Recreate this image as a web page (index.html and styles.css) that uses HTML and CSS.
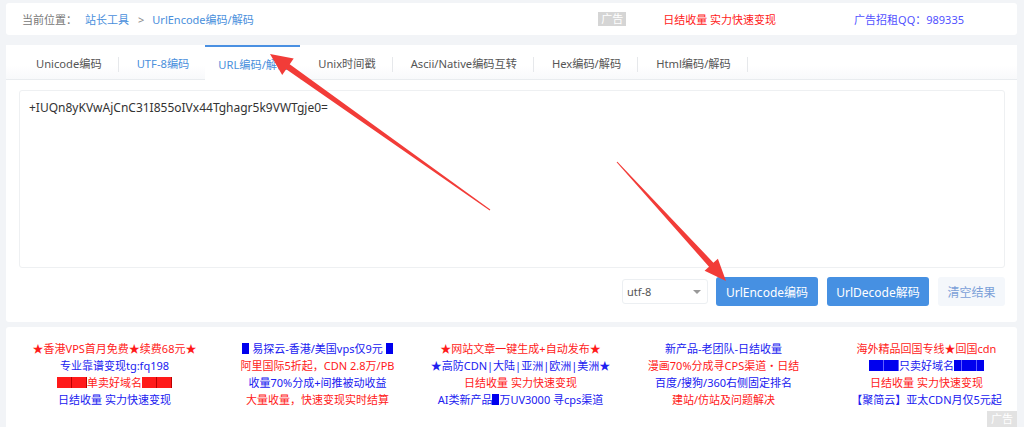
FILE: index.html
```html
<!DOCTYPE html>
<html lang="zh-CN">
<head>
    <meta charset="UTF-8">
    <meta name="viewport" content="width=device-width, initial-scale=1.0">
    <title>UrlEncode编码/解码 - 站长工具</title>
    <link rel="stylesheet" href="styles.css">
</head>
<body>
    <div class="page">
        <div class="crumb">
            <span class="crumb-label">当前位置：</span>
            <a href="#">站长工具</a>
            <span class="crumb-sep">&gt;</span>
            <a href="#">UrlEncode编码/解码</a>
            <div class="top-ads">
                <span class="ad-tag">广告</span>
                <a class="ad-red" href="#">日结收量 实力快速变现</a>
                <a class="ad-qq" href="#">广告招租QQ：989335</a>
            </div>
        </div>

        <div class="tool">
            <ul class="tabs">
                <li><a href="#">Unicode编码</a></li>
                <li class="visited"><a href="#">UTF-8编码</a></li>
                <li class="active"><a href="#">URL编码/解码</a></li>
                <li><a href="#">Unix时间戳</a></li>
                <li><a href="#">Ascii/Native编码互转</a></li>
                <li><a href="#">Hex编码/解码</a></li>
                <li><a href="#">Html编码/解码</a></li>
            </ul>
            <div class="tool-body">
                <textarea class="code-input" spellcheck="false">+IUQn8yKVwAjCnC31I855oIVx44Tghagr5k9VWTgje0=</textarea>
                <div class="actions">
                    <div class="select">
                        <select>
                            <option>utf-8</option>
                            <option>gb2312</option>
                        </select>
                    </div>
                    <button class="btn btn-primary">UrlEncode编码</button>
                    <button class="btn btn-primary">UrlDecode解码</button>
                    <button class="btn btn-plain">清空结果</button>
                </div>
            </div>
        </div>

        <div class="ads">
            <div class="ad-col">
                <a class="red" href="#">★香港VPS首月免费★续费68元★</a>
                <a class="blue" href="#">专业靠谱变现tg:fq198</a>
                <a class="red" href="#"><i class="blk"></i>单卖好域名<i class="blk"></i></a>
                <a class="blue" href="#">日结收量 实力快速变现</a>
            </div>
            <div class="ad-col">
                <a class="blue" href="#"><i class="sq"></i> 易探云-香港/美国vps仅9元 <i class="sq"></i></a>
                <a class="red" href="#">阿里国际5折起，CDN 2.8万/PB</a>
                <a class="blue" href="#">收量70%分成+间推被动收益</a>
                <a class="red" href="#">大量收量，快速变现实时结算</a>
            </div>
            <div class="ad-col">
                <a class="red" href="#">★网站文章一键生成+自动发布★</a>
                <a class="blue" href="#">★高防CDN|大陆|亚洲|欧洲|美洲★</a>
                <a class="red" href="#">日结收量 实力快速变现</a>
                <a class="blue" href="#">AI类新产品<i class="sq"></i>万UV3000 寻cps渠道</a>
            </div>
            <div class="ad-col">
                <a class="blue" href="#">新产品-老团队-日结收量</a>
                <a class="red" href="#">漫画70%分成寻CPS渠道・日结</a>
                <a class="blue" href="#">百度/搜狗/360右侧固定排名</a>
                <a class="red" href="#">建站/仿站及问题解决</a>
            </div>
            <div class="ad-col">
                <a class="red" href="#">海外精品回国专线★回国cdn</a>
                <a class="blue" href="#"><i class="blk"></i>只卖好域名<i class="blk"></i></a>
                <a class="red" href="#">日结收量 实力快速变现</a>
                <a class="blue" href="#">【聚简云】亚太CDN月仅5元起</a>
            </div>
            <span class="ad-tag ad-corner">广告</span>
        </div>

        <!-- annotation arrows drawn over the tool -->
        <svg class="marks" width="1024" height="427" viewBox="0 0 1024 427">
            <polygon points="490.3,209.6 289.7,64.3 293.7,58.6 270,54 282.2,74.9 286.2,69.2 489.7,210.4"></polygon>
            <polygon points="617.4,161.7 713.4,262.7 717.9,258.7 726,281 704.6,270.8 709,266.7 616.6,162.3"></polygon>
        </svg>
    </div>
</body>
</html>
```

FILE: styles.css
```css
* {
    margin: 0;
    padding: 0;
    box-sizing: border-box;
}

body {
    background: #f2f4f7;
    font-family: "Noto Sans", "Noto Sans CJK SC", sans-serif;
    font-size: 12px;
    color: #555;
    overflow: hidden;
}

a {
    text-decoration: none;
}

.page {
    position: relative;
    padding: 3px 7px 0 6px;
}

/* breadcrumb bar */
.crumb {
    display: flex;
    align-items: center;
    height: 32px;
    padding: 0 53px 0 16px;
    background: #fff;
    border-radius: 3px;
    font-size: 11px;
    color: #777;
}

.crumb-label {
    margin-right: 8px;
}

.crumb a {
    color: #4a8fdc;
}

.crumb-sep {
    margin: 0 8px 0 9px;
    color: #888;
}

.top-ads {
    display: flex;
    align-items: center;
    margin-left: auto;
}

.ad-tag {
    display: inline-block;
    padding: 0 3px;
    line-height: 14px;
    background: #d5d5d5;
    color: #fff;
    font-size: 11px;
}

.top-ads .ad-red {
    margin-left: 37px;
    color: #ff1a1a;
}

.top-ads .ad-qq {
    margin-left: 78px;
    color: #5252ff;
}

/* tool card */
.tool {
    margin-top: 10px;
    background: #fff;
    border-radius: 3px;
    padding-bottom: 16px;
}

.tabs {
    display: flex;
    list-style: none;
    height: 35px;
    padding-left: 12px;
    border-bottom: 1px solid #e9ecef;
    background: linear-gradient(#fff 60%, #f8f9fb);
    font-size: 11.2px;
}

.tabs li {
    position: relative;
    display: flex;
    align-items: center;
    padding-top: 2px;
}

.tabs li::after {
    content: '';
    position: absolute;
    right: 0;
    top: 12px;
    height: 15px;
    border-right: 1px solid #e6e8eb;
}

.tabs a {
    padding: 0 17px 0 18px;
    color: #555;
}

.tabs .visited a {
    color: #4a8fdc;
}

.tabs .active {
    height: 36px;
    margin-left: -1px;
    padding-top: 0;
    border-top: 2px solid #4a90e2;
    background: #fff;
}

.tabs .active::after {
    display: none;
}

.tabs .active a {
    padding: 0 12px 0 13px;
    color: #4a8fdc;
}

.tool-body {
    padding: 10px 12px 0 13px;
}

.code-input {
    display: block;
    width: 100%;
    height: 178px;
    padding: 8px 9px;
    border: 1px solid #eef0f2;
    border-radius: 3px;
    resize: none;
    outline: none;
    font-family: "Noto Sans", "Noto Sans CJK SC", sans-serif;
    font-size: 12px;
    color: #333;
}

.actions {
    display: flex;
    align-items: center;
    justify-content: flex-end;
    margin-top: 9px;
}

.select {
    position: relative;
    margin-right: 8px;
}

.select select {
    appearance: none;
    width: 86px;
    height: 25px;
    padding: 0 18px 0 4px;
    border: 1px solid #eceff2;
    border-radius: 3px;
    background: #fff;
    font-family: inherit;
    font-size: 11px;
    color: #555;
}

.select::after {
    content: '';
    position: absolute;
    right: 7px;
    top: 11px;
    border: 4px solid transparent;
    border-top-color: #999;
    pointer-events: none;
}

.btn {
    height: 29px;
    border: none;
    border-radius: 3px;
    font-family: inherit;
    font-size: 12px;
    cursor: pointer;
}

.btn-primary {
    width: 102px;
    margin-right: 9px;
    background: #4690e2;
    color: #fff;
}

.btn-plain {
    width: 67px;
    background: #f4f7fb;
    color: #7ba0d8;
}

/* ad links */
.ads {
    position: relative;
    display: grid;
    grid-template-columns: repeat(5, 203px);
    margin-top: 5px;
    height: 100px;
    padding: 13px 0 0 7px;
    background: #fff;
    border-radius: 3px 3px 0 0;
}

.ad-col {
    display: flex;
    flex-direction: column;
    align-items: center;
    font-size: 11px;
    line-height: 17px;
}

.ad-col .red {
    color: #ff1a1a;
}

.ad-col .blue {
    color: #2020f0;
}

.blk {
    display: inline-block;
    width: 30px;
    height: 11px;
    vertical-align: -1px;
    background: repeating-linear-gradient(90deg, currentColor 0 7px, #b00 7px 7.5px);
}

.blue .blk {
    background: repeating-linear-gradient(90deg, #0000ee 0 7px, #6060ff 7px 7.5px);
}

.sq {
    display: inline-block;
    width: 7px;
    height: 11px;
    vertical-align: -1px;
    background: #0000ee;
}

.ad-corner {
    position: absolute;
    right: 0;
    bottom: 0;
    padding: 0 4px;
    line-height: 16px;
    background: #e2e2e2;
}

.marks {
    position: absolute;
    top: 0;
    left: 0;
    pointer-events: none;
}

.marks polygon {
    fill: #f23c38;
}
```
